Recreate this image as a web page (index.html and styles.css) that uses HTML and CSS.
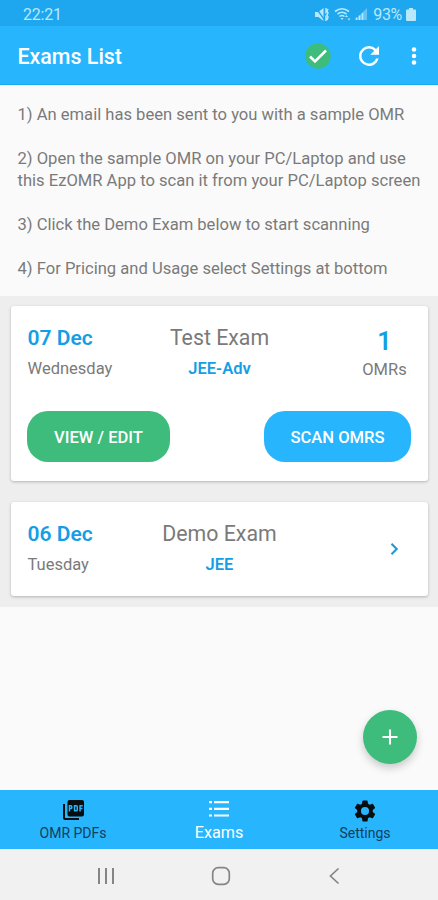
FILE: index.html
```html
<!DOCTYPE html>
<html lang="en">
<head>
<meta charset="utf-8">
<meta name="viewport" content="width=device-width, initial-scale=1">
<title>Exams List</title>
<link rel="stylesheet" href="styles.css">
</head>
<body>
<div class="screen">
  <header class="status-bar">
    <span class="clock">22:21</span>
    <div class="status-icons">
      <svg class="mute" width="15" height="15" viewBox="0 0 15 15"><path d="M0 5h3.500L8.500 1v13l-5-4H0z" fill="currentColor"/><path d="M1 1l9 12.500" stroke="#1ea6ee" stroke-width="1.300"/><path d="M11 1v5.500M11 8.500V14M13 2l-1 2 1 2-1 2 1 2-1 3" fill="none" stroke="currentColor" stroke-width="1.500"/></svg>
      <svg class="wifi" width="18" height="15" viewBox="0 0 18 15"><path d="M1 4.500Q8 -1 15 4.500M3.500 7Q8 3.500 12.500 7M5.500 9.500Q8 7.500 10.500 9.500" fill="none" stroke="currentColor" stroke-width="1.600"/><path d="M6.500 11h3L8 13zM11 10l1.500-2 1.500 2zM13.500 11.500h3L15 13.500z" fill="currentColor"/></svg>
      <svg class="signal" width="12" height="12" viewBox="0 0 12 12"><path d="M0 12L12 0v12z" fill="currentColor" opacity=".45"/><path d="M1.500 9.500V12M4.500 7.500V12M7.500 5V12" stroke="currentColor" stroke-width="1.500"/></svg>
      <span class="percent">93%</span>
      <svg class="battery" width="10" height="13" viewBox="0 0 10 13"><path d="M3 0h4v1.500h2q1 0 1 1V12q0 1-1 1H1q-1 0-1-1V2.500q0-1 1-1h2z" fill="currentColor"/></svg>
    </div>
  </header>
  <div class="app-bar">
    <h1>Exams List</h1>
    <svg class="check" width="26" height="26" viewBox="0 0 26 26"><circle cx="13" cy="13" r="12.700" fill="#3dbc7c"/><path d="M5 13.500l5 5L21 7.500" fill="none" stroke="#fff" stroke-width="2.500"/></svg>
    <svg class="refresh" width="30" height="30" viewBox="0 0 24 24"><path fill="#fff" d="M17.650 6.350A7.958 7.958 0 0 0 12 4a8 8 0 1 0 7.730 10h-2.080A6 6 0 1 1 12 6c1.660 0 3.140.69 4.220 1.780L13 11h7V4z"/></svg>
    <svg class="more" width="6" height="20" viewBox="0 0 6 20"><g fill="#fff"><circle cx="3" cy="3.500" r="2.300"/><circle cx="3" cy="10" r="2.300"/><circle cx="3" cy="16.500" r="2.300"/></g></svg>
  </div>
  <main>
    <section class="instructions">
      <p>1) An email has been sent to you with a sample OMR</p>
      <p>2) Open the sample OMR on your PC/Laptop and use<br>this EzOMR App to scan it from your PC/Laptop screen</p>
      <p>3) Click the Demo Exam below to start scanning</p>
      <p>4) For Pricing and Usage select Settings at bottom</p>
    </section>
    <section class="exam-list">
      <article class="card">
        <div class="summary">
          <div class="date"><strong>07 Dec</strong><span>Wednesday</span></div>
          <div class="exam"><h2>Test Exam</h2><b>JEE-Adv</b></div>
          <div class="count"><strong>1</strong><span>OMRs</span></div>
        </div>
        <div class="actions">
          <button class="btn view">VIEW / EDIT</button>
          <button class="btn scan">SCAN OMRS</button>
        </div>
      </article>
      <article class="card">
        <div class="summary">
          <div class="date"><strong>06 Dec</strong><span>Tuesday</span></div>
          <div class="exam"><h2>Demo Exam</h2><b>JEE</b></div>
          <svg class="chevron" width="9" height="14" viewBox="0 0 9 14"><path d="M1.500 1.800L6.700 7l-5.200 5.200" fill="none" stroke="#2398d3" stroke-width="2.100"/></svg>
        </div>
      </article>
    </section>
    <button class="fab" aria-label="Add exam"><svg width="16" height="16" viewBox="0 0 16 16"><path d="M8 .5v15M.5 8h15" stroke="#fff" stroke-width="2.100"/></svg></button>
  </main>
  <nav class="tabs">
    <a class="tab">
      <svg width="26" height="26" viewBox="0 0 26 26"><path d="M5 6H3v14q0 2 2 2h14v-2H5z"/><path fill-rule="evenodd" d="M22 2H9.500q-2 0-2 2v12.500q0 2 2 2H22q2 0 2-2V4q0-2-2-2zm-9.500 7.700q0 1.500-1.500 1.500h-.8v2.200H8.700V7H11q1.500 0 1.500 1.500zm5.500 2.200q0 1.500-1.500 1.500h-2.700V7h2.700q1.500 0 1.500 1.500zm4.800-3.400h-2v1.200h1.700v1.500h-1.700v2.200h-1.500V7h3.500zM10.200 9.700h.8V8.500h-.8zm5.100 2.200h1.200V8.500h-1.200z"/></svg>
      <span>OMR PDFs</span>
    </a>
    <a class="tab active">
      <svg width="26" height="26" viewBox="0 0 26 26"><path d="M3 3h3v2.200H3zm5 0h15v2.200H8zM3 9.700h3v2.200H3zm5 0h15v2.200H8zm-5 6.700h3v2.200H3zm5 0h15v2.200H8z"/></svg>
      <span>Exams</span>
    </a>
    <a class="tab">
      <svg width="26" height="26" viewBox="-.5 -.5 25 25"><path d="M19.430 12.980c.04-.32.07-.64.07-.98s-.03-.66-.07-.98l2.110-1.650c.19-.15.24-.42.12-.64l-2-3.460c-.12-.22-.39-.3-.61-.22l-2.490 1c-.52-.4-1.080-.73-1.690-.98l-.38-2.650A.488.488 0 0 0 14 2h-4c-.25 0-.46.18-.49.42l-.38 2.650c-.61.25-1.170.59-1.690.98l-2.490-1c-.23-.09-.49 0-.61.22l-2 3.460c-.13.22-.07.49.12.64l2.110 1.650c-.04.32-.07.65-.07.98s.03.66.07.98l-2.110 1.650c-.19.15-.24.42-.12.64l2 3.460c.12.22.39.3.61.22l2.490-1c.52.4 1.080.73 1.690.98l.38 2.650c.03.24.24.42.49.42h4c.25 0 .46-.18.49-.42l.38-2.650c.61-.25 1.170-.59 1.690-.98l2.490 1c.23.09.49 0 .61-.22l2-3.460c.12-.22.07-.49-.12-.64zM12 15.900a3.900 3.900 0 1 1 0-7.800 3.900 3.900 0 0 1 0 7.800z"/></svg>
      <span>Settings</span>
    </a>
  </nav>
  <footer class="system-nav">
    <svg width="18" height="18" viewBox="0 0 18 18"><path d="M2 1v16M9 1v16M16 1v16" stroke="#858585" stroke-width="2"/></svg>
    <svg width="20" height="20" viewBox="0 0 20 20"><rect x="1.700" y="1.700" width="16.600" height="16.600" rx="5.500" fill="none" stroke="#858585" stroke-width="1.700"/></svg>
    <svg width="18" height="18" viewBox="0 0 18 18"><path d="M12.500 1.500L4.500 9l8 7.500" fill="none" stroke="#858585" stroke-width="1.700"/></svg>
  </footer>
</div>
</body>
</html>
```

FILE: styles.css
```css
* { box-sizing: border-box; }
body { margin: 0; font-family: Roboto, sans-serif; background: #fafafa; color: #7a7a7a; }
h1, h2, p { margin: 0; }
svg { display: block; flex: none; }
button { border: 0; font-family: inherit; padding: 0; }
.screen { width: 438px; height: 900px; display: flex; flex-direction: column; white-space: nowrap; overflow: hidden; }

.status-bar { height: 26px; flex: none; background: #1ea6ee; color: #b9e8fd; display: flex; align-items: center; justify-content: space-between; padding: 2px 22px 0 23px; font-size: 16px; }
.clock { letter-spacing: -0.2px; }
.status-icons { display: flex; align-items: center; }
.wifi { margin-left: 4px; }
.signal { margin-left: 3px; }
.percent { margin: 0 4px 0 6px; letter-spacing: -0.3px; }

.app-bar { height: 59px; flex: none; background: #27b5fe; border-bottom: 1px solid #18a8ec; display: flex; align-items: center; padding: 2px 21px 0 17.500px; }
.app-bar h1 { flex: 1; color: #fff; font-size: 21.400px; font-weight: 500; line-height: 28px; padding-top: 1px; }
.check { margin-right: 23px; }
.refresh { margin-right: 27px; }

main { flex: 1; position: relative; min-height: 0; }
.instructions { height: 211px; padding: 19px 17.500px 0; display: flex; flex-direction: column; gap: 22px; font-size: 16.580px; line-height: 22px; }

.exam-list { height: 311px; background: #eee; padding: 10px 10px 0 11px; display: flex; flex-direction: column; gap: 21px; }
.card { background: #fff; border-radius: 3px; box-shadow: 0 1px 3px rgba(0, 0, 0, .25); padding: 18px 17px 0 16px; height: 94px; }
.card:first-child { height: 175px; }
.summary { display: grid; grid-template-columns: 120px 1fr 120px; height: 87px; }
.date, .exam, .count { display: flex; flex-direction: column; }
.date { padding-left: .5px; }
.date strong { font-size: 21px; font-weight: 600; line-height: 28px; color: #139fe6; }
.date span, .count span { font-size: 16.500px; line-height: 20px; margin-top: 7px; }
.exam { align-items: center; padding-left: 1px; }
.exam h2 { font-size: 21.300px; font-weight: 400; line-height: 28px; }
.exam b { font-size: 16.500px; font-weight: 600; line-height: 20px; margin-top: 7px; color: #139fe6; }
.count { width: 54px; justify-self: end; align-items: center; padding-left: 1px; }
.count strong { font-size: 25px; font-weight: 600; line-height: 36px; color: #139fe6; }
.count .label, .count span { margin-top: 0; }
.chevron { justify-self: end; margin: 22px 12px 0 0; }
.actions { display: flex; justify-content: space-between; }
.btn { height: 51px; border-radius: 21px; color: #fff; font-size: 16.600px; font-weight: 500; padding-top: 1px; }
.view { width: 143px; background: #3dbc7c; }
.scan { width: 147px; background: #27b5fe; }

.fab { position: absolute; right: 21px; bottom: 26px; width: 54px; height: 54px; border-radius: 50%; background: #3dbc7c; display: grid; place-items: center; box-shadow: 0 4px 8px rgba(0, 0, 0, .2); }

.tabs { height: 59px; flex: none; background: #27b5fe; display: grid; grid-template-columns: repeat(3, 1fr); }
.tab { display: flex; flex-direction: column; align-items: center; padding-top: 8px; font-size: 14px; line-height: 18px; color: #123f59; }
.tab svg { fill: #080d10; }
.tab.active { color: #fff; font-size: 16.200px; }
.tab.active svg { fill: #fff; }

.system-nav { height: 51px; flex: none; background: #f1f1f1; display: flex; align-items: center; justify-content: space-between; padding: 2px 94px 0 97px; }
```
